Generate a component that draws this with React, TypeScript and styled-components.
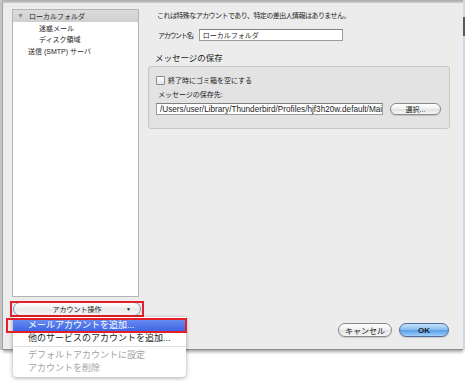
import React from 'react';
import styled, { createGlobalStyle } from 'styled-components';

const GlobalStyle = createGlobalStyle`
  html, body {
    margin: 0;
    padding: 0;
    background: #ffffff;
  }
  body {
    font-family: 'Liberation Sans', 'Noto Sans CJK JP', sans-serif;
    font-size: 7px;
    color: #1c1c1c;
  }
`;

const Screen = styled.div`
  position: relative;
  width: 465px;
  height: 381px;
  overflow: hidden;
  background: #ffffff;
`;

const WindowRow = styled.div`
  display: flex;
  height: 350px;
`;

const LeftEdge = styled.div`
  width: 3px;
  background: linear-gradient(to right, #c4c4c4, #d6d6d6);
  border-right: 1px solid #b9b9b9;
  box-sizing: border-box;
`;

const RightEdge = styled.div`
  width: 2px;
  background: linear-gradient(
    to bottom,
    #d8d8d8 0, #d8d8d8 17px,
    #5a5a5a 17px, #5a5a5a 36px,
    #c9d9ea 36px, #c9d9ea 100%
  );
`;

const Dialog = styled.div`
  width: 460px;
  display: flex;
  flex-direction: column;
  background: #ececec;
  border-bottom: 1px solid #8e8e8e;
  box-shadow: 0 2px 3px rgba(0, 0, 0, 0.35);
  box-sizing: border-box;
`;

const TopStrip = styled.div`
  height: 3px;
  background: linear-gradient(to bottom, #a9a9a9, #cfcfcf);
`;

const Body = styled.div`
  display: flex;
  padding: 6px 0 0 9px;
`;

const LeftColumn = styled.div`
  width: 127px;
  display: flex;
  flex-direction: column;
`;

const Tree = styled.div`
  height: 288px;
  background: #ffffff;
  border: 1px solid #b4b4b4;
  box-sizing: border-box;
`;

const TreeRow = styled.div<{ $indent: number; $selected?: boolean }>`
  display: flex;
  align-items: center;
  height: 11.7px;
  padding-left: ${p => p.$indent}px;
  background: ${p => (p.$selected ? 'linear-gradient(to bottom, #dcdcdc, #cfcfcf)' : 'transparent')};
  white-space: nowrap;
`;

const Disclosure = styled.span`
  width: 12px;
  margin-left: -12px;
  font-size: 7px;
  line-height: 7px;
  color: #8c8c8c;
`;

const AccountButton = styled.div`
  position: relative;
  margin: 5px 0 0 1px;
  width: 128px;
  height: 14px;
  display: flex;
  align-items: center;
  justify-content: center;
  border: 1px solid #7c98bf;
  border-radius: 7px;
  background: linear-gradient(to bottom, #ffffff, #e9e9e9 55%, #f6f6f6);
  box-sizing: border-box;

  &::after {
    content: '';
    position: absolute;
    left: -4px;
    right: -4px;
    top: -2px;
    bottom: -2px;
    border: 2px solid #e3202a;
  }
`;

const DropArrow = styled.span`
  position: absolute;
  right: 9px;
  top: 3px;
  font-size: 5px;
  color: #222;
`;

const RightColumn = styled.div`
  margin-left: 9px;
  width: 302px;
  display: flex;
  flex-direction: column;
`;

const InfoText = styled.div`
  margin: 1px 0 0 9px;
  height: 12px;
  line-height: 12px;
  letter-spacing: -0.55px;
  white-space: nowrap;
`;

const FieldRow = styled.div`
  display: flex;
  align-items: center;
  margin: 7px 0 0 10px;
  gap: 6px;
`;

const Label = styled.span<{ $tight?: boolean }>`
  white-space: nowrap;
  letter-spacing: ${p => (p.$tight ? '-1.3px' : '0')};
`;

const TextInput = styled.div<{ $width: number; $latin?: boolean }>`
  width: ${p => p.$width}px;
  height: 12px;
  line-height: 11px;
  padding-left: 3px;
  font-size: ${p => (p.$latin ? '8.2px' : '7px')};
  background: #ffffff;
  border: 1px solid #9c9c9c;
  border-top-color: #7f7f7f;
  box-sizing: border-box;
  white-space: nowrap;
  overflow: hidden;
`;

const SectionTitle = styled.div`
  margin: 11px 0 0 7px;
  height: 12px;
  line-height: 12px;
  font-size: 8.5px;
`;

const GroupBox = styled.div`
  margin-top: 2px;
  height: 63px;
  background: #e3e3e3;
  border: 1px solid #c6c6c6;
  border-radius: 3px;
  box-sizing: border-box;
  display: flex;
  flex-direction: column;
`;

const CheckRow = styled.div`
  display: flex;
  align-items: center;
  gap: 3px;
  margin: 8px 0 0 7px;
`;

const CheckBox = styled.span`
  width: 9px;
  height: 9px;
  border: 1px solid #8c8c8c;
  border-radius: 1px;
  background: linear-gradient(to bottom, #ffffff, #e6e6e6);
  box-sizing: border-box;
`;

const SubLabel = styled.div`
  margin: 5px 0 0 9px;
  height: 10px;
  line-height: 10px;
`;

const PathRow = styled.div`
  display: flex;
  align-items: center;
  margin: 3px 0 0 7px;
  gap: 7px;
`;

const PillButton = styled.div<{ $width: number; $primary?: boolean; $large?: boolean }>`
  width: ${p => p.$width}px;
  height: ${p => (p.$large ? 14 : 12)}px;
  font-size: ${p => (p.$large ? 8 : 7)}px;
  display: flex;
  align-items: center;
  justify-content: center;
  border-radius: 8px;
  box-sizing: border-box;
  font-weight: ${p => (p.$primary ? 700 : 400)};
  border: 1px solid ${p => (p.$primary ? '#4c6f9e' : '#8a8a8a')};
  background: ${p =>
    p.$primary
      ? 'linear-gradient(to bottom, #c8e0fa 0%, #8ec0f0 45%, #5b9ee8 55%, #9fd0fa 100%)'
      : 'linear-gradient(to bottom, #ffffff 0%, #f1f1f1 45%, #e2e2e2 55%, #f7f7f7 100%)'};
  box-shadow: 0 1px 1px rgba(0, 0, 0, 0.15);
  white-space: nowrap;
`;

const Footer = styled.div`
  display: flex;
  justify-content: flex-end;
  gap: 7px;
  padding: 7px 14px 0 0;
`;

const Menu = styled.div`
  position: absolute;
  left: 13px;
  top: 317px;
  width: 173px;
  height: 60px;
  padding-top: 2px;
  box-sizing: border-box;
  background: #ffffff;
  border-radius: 0 0 4px 4px;
  box-shadow: 0 1px 4px rgba(0, 0, 0, 0.35);
  display: flex;
  flex-direction: column;
  font-size: 9px;
`;

const MenuItem = styled.div<{ $active?: boolean; $disabled?: boolean }>`
  position: relative;
  height: 13px;
  line-height: 13px;
  padding-left: 15px;
  white-space: nowrap;
  color: ${p => (p.$active ? '#ffffff' : p.$disabled ? '#a3a3a3' : '#1c1c1c')};
  background: ${p => (p.$active ? 'linear-gradient(to bottom, #6a8ef2, #3b63e4)' : 'transparent')};

  ${p =>
    p.$active &&
    `&::after {
      content: '';
      position: absolute;
      left: -7px;
      right: -1px;
      top: -1px;
      bottom: -1px;
      border: 2px solid #e3202a;
    }`}
`;

const MenuSeparator = styled.div`
  height: 1px;
  margin: 1px 0 2px;
  background: #e0e0e0;
`;

export default function App() {
  return (
    <>
      <GlobalStyle />
      <Screen>
        <WindowRow>
          <LeftEdge />
          <Dialog>
            <TopStrip />
            <Body>
              <LeftColumn>
                <Tree>
                  <TreeRow $indent={16} $selected>
                    <Disclosure>▼</Disclosure>ローカルフォルダ
                  </TreeRow>
                  <TreeRow $indent={26}>迷惑メール</TreeRow>
                  <TreeRow $indent={26}>ディスク領域</TreeRow>
                  <TreeRow $indent={15}>送信 (SMTP) サーバ</TreeRow>
                </Tree>
                <AccountButton>
                  アカウント操作
                  <DropArrow>▼</DropArrow>
                </AccountButton>
              </LeftColumn>
              <RightColumn>
                <InfoText>これは特殊なアカウントであり、特定の差出人情報はありません。</InfoText>
                <FieldRow>
                  <Label $tight>アカウント名:</Label>
                  <TextInput $width={144}>ローカルフォルダ</TextInput>
                </FieldRow>
                <SectionTitle>メッセージの保存</SectionTitle>
                <GroupBox>
                  <CheckRow>
                    <CheckBox />
                    <Label>終了時にゴミ箱を空にする</Label>
                  </CheckRow>
                  <SubLabel>メッセージの保存先:</SubLabel>
                  <PathRow>
                    <TextInput $width={227} $latin>/Users/user/Library/Thunderbird/Profiles/hjf3h20w.default/Mai</TextInput>
                    <PillButton $width={51}>選択...</PillButton>
                  </PathRow>
                </GroupBox>
              </RightColumn>
            </Body>
            <Footer>
              <PillButton $width={54} $large>キャンセル</PillButton>
              <PillButton $width={50} $large $primary>OK</PillButton>
            </Footer>
          </Dialog>
          <RightEdge />
        </WindowRow>
        <Menu>
          <MenuItem $active>メールアカウントを追加...</MenuItem>
          <MenuItem>他のサービスのアカウントを追加...</MenuItem>
          <MenuSeparator />
          <MenuItem $disabled>デフォルトアカウントに設定</MenuItem>
          <MenuItem $disabled>アカウントを削除</MenuItem>
        </Menu>
      </Screen>
    </>
  );
}
